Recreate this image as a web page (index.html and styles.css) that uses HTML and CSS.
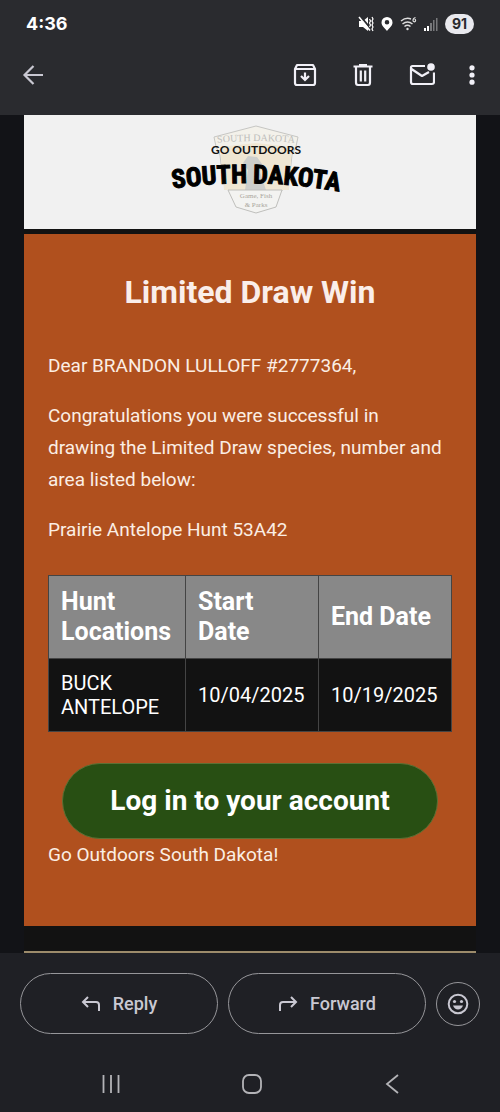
FILE: index.html
```html
<!DOCTYPE html>
<html lang="en">
<head>
  <meta charset="UTF-8" />
  <meta name="viewport" content="width=device-width, initial-scale=1.0"/>
  <title>Limited Draw Win</title>
  <link rel="stylesheet" href="styles.css">
</head>
<body>
  <header class="top">
    <div class="status">
      <span class="clock">4:36</span>
      <div class="status-icons">
        <svg width="16" height="16" viewBox="0 0 16 16" fill="#fff" stroke="#fff">
          <path stroke="none" d="M1 5h4l5-4v14l-5-4H1z"/>
          <path stroke="#2a2b2f" stroke-width="2" d="M2 0l11 13"/>
          <path fill="none" stroke-width="1.600" d="M1 1l11 13.500"/>
          <path fill="none" stroke-width="1.200" d="M11.500 3l1 2-1 2 1 2-1 2M14 1l1 2-1 2 1 2-1 2 1 2-1 2 1 2"/>
        </svg>
        <svg width="12" height="16" viewBox="0 0 12 16" fill="#fff">
          <path fill-rule="evenodd" d="M6 1a5.500 5.500 0 0 0-5.500 5.500C.5 10 4 12 6 15c2-3 5.500-5 5.500-8.500A5.500 5.500 0 0 0 6 1zm0 3a2.300 2.300 0 1 1 0 4.600A2.300 2.300 0 0 1 6 4z"/>
        </svg>
        <svg width="17" height="16" viewBox="0 0 17 16" fill="none" stroke="#ddd" stroke-width="1.500">
          <path d="M1 5q5-4 10-2M2.500 8q5-4 10 0M4.500 10.500q3-2.500 6 0"/>
          <circle cx="7.500" cy="13" r="1.200" fill="#ddd" stroke="none"/>
          <path stroke-width="1.200" d="M15.500 1.500q-2.500.5-2.500 3a1.300 1.300 0 1 0 1.500-1.300"/>
        </svg>
        <svg width="14" height="16" viewBox="0 0 14 16">
          <path fill="#fff" d="M0 12h2v3H0zM3 10h2v5H3z"/>
          <path fill="#77787b" d="M6 7h2v8H6zM9 4h1.500v11H9zM12 2h1.500v13H12z"/>
        </svg>
        <span class="battery">91</span>
      </div>
    </div>
    <div class="toolbar">
      <button type="button" class="icon-btn" aria-label="Back">
        <svg width="24" height="24" viewBox="0 0 24 24" fill="none" stroke="#c9c8d2" stroke-width="2.200"><path d="M22 12H4M12.500 3L3.500 12l9 9"/></svg>
      </button>
      <div class="actions">
        <button type="button" class="icon-btn" aria-label="Archive">
          <svg width="24" height="24" viewBox="0 0 24 24" fill="none" stroke="#f1f0f7" stroke-width="2.200"><path stroke-linejoin="round" d="M2 6v14q0 2 2 2h16q2 0 2-2V6l-2-4H4L2 6zM2 6h20"/><path d="M12 9.500v7M8 13l4 4 4-4"/></svg>
        </button>
        <button type="button" class="icon-btn" aria-label="Delete">
          <svg width="24" height="24" viewBox="0 0 24 24" fill="none" stroke="#f1f0f7" stroke-width="2.200"><path d="M2.500 3.500h19M8 2h8M5 4v15.500q0 2.500 2 2.500h10q2 0 2-2.500V4M9.800 7.500v11M14.200 7.500v11"/></svg>
        </button>
        <button type="button" class="icon-btn" aria-label="Mark as unread">
          <svg width="26" height="24" viewBox="0 0 26 24" fill="none" stroke="#f1f0f7" stroke-width="2.200"><path stroke-linejoin="round" d="M16 3H3.500Q2 3 2 4.500v14.500q0 2 2 2h19q2 0 2-2V9.500M2.500 6L13 13l7-4"/><circle cx="22" cy="4" r="3.800" fill="#f1f0f7" stroke="none"/></svg>
        </button>
        <button type="button" class="icon-btn" aria-label="More options">
          <svg width="6" height="24" viewBox="0 0 6 24" fill="#f1f0f7"><circle cx="3" cy="4.800" r="2.600"/><circle cx="3" cy="12" r="2.600"/><circle cx="3" cy="19.200" r="2.600"/></svg>
        </button>
      </div>
    </div>
  </header>

  <main class="mail">
    <div class="logo">
      <svg width="190" height="114" viewBox="155 115 190 114">
        <path fill="#f3f1ea" stroke="#c6c6c3" d="M256 126l-42 11q1 10 6 18l2 18 7 17h54l7-17 2-18q5-8 6-18z"/>
        <path fill="#efe6d2" d="M220 147l36-4 36 4-3 43h-65z"/>
        <path fill="#cdcecb" d="M248 156l9 1 5 7-2 8 6 18h-21l3-20-5-7z"/>
        <path fill="#f3f3f1" stroke="#bfbfbc" d="M228 190h54l-6 17-20 6-20-6z"/>
        <path id="crest" fill="none" d="M216 143q40-4 80 0"/>
        <path id="arch" fill="none" d="M170 189q86-13 172 3"/>
        <text class="crest-text"><textPath href="#crest" startOffset="50%">SOUTH DAKOTA</textPath></text>
        <text class="crest-small" x="256" y="198">Game, Fish</text>
        <text class="crest-small" x="256" y="207">&amp; Parks</text>
        <text class="logo-go" x="256" y="154">GO OUTDOORS</text>
        <text class="logo-name"><textPath href="#arch" startOffset="50%">SOUTH DAKOTA</textPath></text>
      </svg>
    </div>

    <section class="card">
      <h1>Limited Draw Win</h1>
      <p>Dear BRANDON LULLOFF #2777364,</p>
      <p>Congratulations you were successful in drawing the Limited Draw species, number and area listed below:</p>
      <p>Prairie Antelope Hunt 53A42</p>
      <table>
        <thead>
          <tr><th class="location">Hunt Locations</th><th>Start Date</th><th>End Date</th></tr>
        </thead>
        <tbody>
          <tr><td>BUCK ANTELOPE</td><td>10/04/2025</td><td>10/19/2025</td></tr>
        </tbody>
      </table>
      <a class="login" href="#">Log in to your account</a>
      <p>Go Outdoors South Dakota!</p>
    </section>
    <div class="divider"></div>
  </main>

  <footer class="bottom">
    <div class="replies">
      <button type="button" class="pill">
        <svg width="20" height="16" viewBox="0 0 20 16" fill="none" stroke="#c9c8d2" stroke-width="2"><path d="M7 1L2 6l5 5M2 6h13q3 0 3 3v6"/></svg>
        Reply
      </button>
      <button type="button" class="pill">
        <svg width="20" height="16" viewBox="0 0 20 16" fill="none" stroke="#c9c8d2" stroke-width="2"><path d="M13 1l5 5-5 5M18 6H5Q2 6 2 9v6"/></svg>
        Forward
      </button>
      <button type="button" class="emoji" aria-label="Add emoji reaction">
        <svg width="22" height="22" viewBox="0 0 22 22" fill="#c9c8d2"><circle cx="11" cy="11" r="9.300" fill="none" stroke="#c9c8d2" stroke-width="2"/><circle cx="7.500" cy="8.500" r="1.600"/><circle cx="14.500" cy="8.500" r="1.600"/><path d="M6 12.500h10q-1.500 4-5 4t-5-4z"/></svg>
      </button>
    </div>
    <nav class="sysnav">
      <button type="button" class="icon-btn" aria-label="Recents">
        <svg width="20" height="20" viewBox="0 0 20 20" fill="none" stroke="#b3b3b7" stroke-width="1.800"><path d="M2.500 1v18M10 1v18M17.500 1v18"/></svg>
      </button>
      <button type="button" class="icon-btn" aria-label="Home">
        <svg width="20" height="20" viewBox="0 0 20 20" fill="none" stroke="#b3b3b7" stroke-width="1.800"><rect x="1" y="1" width="18" height="18" rx="6"/></svg>
      </button>
      <button type="button" class="icon-btn" aria-label="Back">
        <svg width="20" height="20" viewBox="0 0 20 20" fill="none" stroke="#b3b3b7" stroke-width="1.800"><path d="M16 1L5 10l11 9"/></svg>
      </button>
    </nav>
  </footer>
</body>
</html>
```
FILE: styles.css
```css
* { box-sizing: border-box; }
body {
  font-family: Roboto, sans-serif;
  background: #121317;
  color: #fff;
  margin: 0;
  min-height: 100vh;
  display: flex;
  flex-direction: column;
}
button {
  font-family: inherit;
  background: none;
  border: none;
  padding: 0;
  color: inherit;
  cursor: pointer;
}
svg {
  display: block;
}

/* status bar + toolbar */
.top {
  background: #2a2b2f;
  padding-bottom: 12px;
}
.status {
  display: flex;
  align-items: center;
  justify-content: space-between;
  height: 47px;
  padding: 0 26px;
}
.clock {
  font-family: Inter, sans-serif;
  font-size: 18px;
  font-weight: 700;
}
.status-icons {
  display: flex;
  align-items: center;
  gap: 7px;
}
.battery {
  background: #e9e9ee;
  color: #2a2b2f;
  border-radius: 10px;
  width: 29px;
  line-height: 20px;
  text-align: center;
  font-family: Inter, sans-serif;
  font-size: 14px;
  font-weight: 700;
}
.toolbar {
  display: flex;
  align-items: center;
  justify-content: space-between;
  height: 56px;
  padding: 0 25px 0 21px;
}
.actions {
  display: flex;
  gap: 34px;
}

/* message */
.mail {
  background: #121212;
  margin: 0 24px;
  flex: 1;
}
.logo {
  background: #f1f1f1;
  margin-bottom: 5px;
  display: flex;
  justify-content: center;
}
.crest-text {
  font: 10px "Liberation Serif", serif;
  fill: #bdbdba;
  text-anchor: middle;
}
.crest-small {
  font: 7px "Liberation Serif", serif;
  fill: #a9a69c;
  text-anchor: middle;
}
.logo-go {
  font: 700 12px Lato, sans-serif;
  fill: #111;
  text-anchor: middle;
}
.logo-name {
  font: 700 26px "Roboto Condensed", "Liberation Sans Narrow", sans-serif;
  fill: #000;
  stroke: #000;
  stroke-width: 1px;
  text-anchor: middle;
}
.card {
  background: #b0501e;
  padding: 39px 24px 55px;
}
h1 {
  margin: 0 0 39px;
  font-size: 32px;
  line-height: 38px;
  text-align: center;
  color: #faeeea;
}
p {
  margin: 0 0 18px;
  padding-right: 4px;
  font-size: 19px;
  line-height: 32px;
  color: #fbeee4;
}
table {
  width: 100%;
  margin: 29px 0 31px;
  border-collapse: collapse;
  background: #121212;
}
th, td {
  border: 1px solid #444;
  padding: 12px;
  text-align: left;
}
th {
  width: 33%;
  background: #888;
  padding: 11px 12px;
  font-size: 25px;
  line-height: 30px;
}
.location {
  width: 34%;
}
td {
  font-size: 20px;
  line-height: 24px;
}
.login {
  display: block;
  margin: 0 14px;
  background: #284f13;
  border: 1px solid #5c7034;
  border-radius: 38px;
  color: #fff;
  font-size: 28px;
  font-weight: 700;
  line-height: 74px;
  text-align: center;
  text-decoration: none;
}
.login + p {
  margin: 0;
}
.divider {
  margin-top: 25px;
  border-top: 2px solid #9c8b6b;
}

/* reply bar + system navigation */
.bottom {
  background: #1f2025;
  padding: 20px 20px 18px;
}
.replies {
  display: flex;
  align-items: center;
  gap: 10px;
}
.pill {
  flex: 1;
  display: flex;
  align-items: center;
  justify-content: center;
  gap: 12px;
  height: 61px;
  border: 1px solid #96969a;
  border-radius: 31px;
  color: #c9c8d2;
  font-size: 18px;
  font-weight: 500;
}
.emoji {
  display: flex;
  align-items: center;
  justify-content: center;
  width: 44px;
  height: 44px;
  border: 1px solid #96969a;
  border-radius: 50%;
}
.sysnav {
  display: flex;
  justify-content: space-between;
  padding: 40px 78px 0 81px;
}
```
